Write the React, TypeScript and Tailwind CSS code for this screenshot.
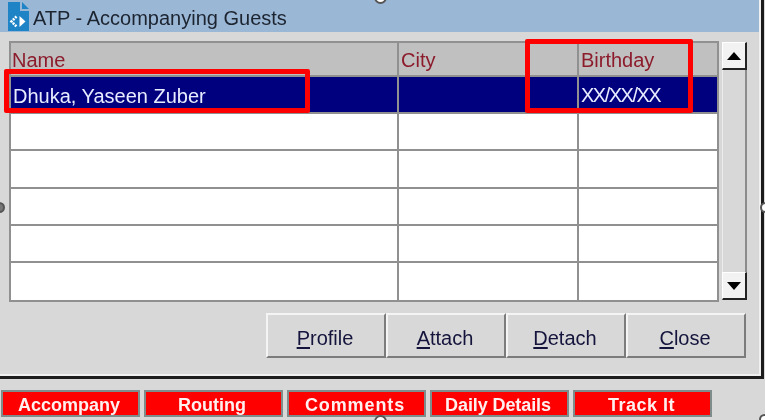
const FONT = "font-['Liberation_Sans',Arial,sans-serif]";

function FileIcon() {
  return (
    <svg width="21" height="29" viewBox="0 0 21 29" className="shrink-0">
      <path d="M0 0H12V9H21V29H0Z" fill="#1f84c6" />
      <path d="M14 0L21 7H14Z" fill="#1f84c6" />
      <path d="M11.5 14L17.5 19.5L11.5 25Z" fill="#fff" />
      <path d="M8.5 14.5L3.5 19.5L8.5 24.5" fill="none" stroke="#fff" strokeWidth="2.6" strokeDasharray="2 1" />
    </svg>
  );
}

function Row({ selected, last }: { selected?: boolean; last?: boolean }) {
  return (
    <div
      className={`flex h-[37.2px] ${last ? "" : "border-b-2 border-[#909090]"} ${selected ? "bg-[#00007f] text-[#e8ecff]" : "bg-white"}`}
    >
      <div className="flex w-[388px] items-center border-r-2 border-[#909090] pl-[2px] pt-[3px] text-[20px]">
        {selected ? "Dhuka, Yaseen Zuber" : ""}
      </div>
      <div className="w-[180px] border-r-2 border-[#909090]" />
      <div className="flex flex-1 items-center pl-[2px] pt-[1px] text-[20px] tracking-[-1.5px]">{selected ? "XX/XX/XX" : ""}</div>
    </div>
  );
}

function ActionButton({ letter, rest }: { letter: string; rest: string }) {
  return (
    <button className="flex h-[45px] w-[120px] items-center justify-center border-t-2 border-l-2 border-t-[#f4f4f4] border-l-[#f4f4f4] border-r-2 border-b-2 border-r-[#7c7c7c] border-b-[#7c7c7c] bg-[#d8d8d8] pt-[5px] pr-[2px] text-[20px] text-[#14143c]">
      <span className="underline underline-offset-2">{letter}</span>
      {rest}
    </button>
  );
}

function RedButton({ label, spacing }: { label: string; spacing?: string }) {
  return (
    <div
      className={`flex h-[27px] w-[139px] items-center justify-center border-2 border-[#7e8c8c] bg-[#ff0000] pt-[3px] pr-[3px] text-[18px] font-bold text-[#fff0f0] ${spacing ?? ""}`}
    >
      {label}
    </div>
  );
}

function ScrollArrow({ up }: { up?: boolean }) {
  return (
    <div className="flex h-[28px] items-center justify-center border-t border-l border-t-white border-l-white border-r-2 border-b-2 border-r-[#222] border-b-[#222] bg-[#f2f2f2]">
      <svg width="14" height="8" viewBox="0 0 14 8">
        <path d={up ? "M7 0L14 8H0Z" : "M0 0H14L7 8Z"} fill="#000" />
      </svg>
    </div>
  );
}

export default function App() {
  return (
    <div className="h-[420px] w-[765px] overflow-hidden bg-[#d8d8d8]">
      <div className={`${FONT} relative h-[420px] w-[765px] bg-[#d8d8d8] blur-[0.5px]`}>
        <div className="h-[379px] w-[764px] border-r-[3px] border-b-[3px] border-[#1c1c1c]">
          <div className="h-full border-r-2 border-b-2 border-[#efefef]">
            <div className="flex h-[32px] items-center gap-[4px] bg-[#9bb7d6] pl-[8px] pt-[1px] text-[20px] text-[#1c2430]">
              <FileIcon />
              <span className="pt-[2px]">ATP - Accompanying Guests</span>
            </div>
            <div className="flex gap-[3px] pl-[9px] pt-[9px]">
              <div className="h-[261px] w-[710px] border-2 border-[#909090]">
                <div className="flex h-[34px] border-b-2 border-[#909090] bg-[#c0c0c0] text-[20px] text-[#8c1c2c]">
                  <div className="flex w-[388px] items-end border-r-2 border-[#909090] pl-[1px]">Name</div>
                  <div className="flex w-[180px] items-end border-r-2 border-[#909090] pl-[2px]">City</div>
                  <div className="flex flex-1 items-end pl-[2px]">Birthday</div>
                </div>
                <Row selected />
                <Row />
                <Row />
                <Row />
                <Row />
                <Row last />
              </div>
              <div className="mt-px flex h-[258px] w-[25px] flex-col bg-[#d8d8d8]">
                <ScrollArrow up />
                <div className="flex-1 border-x border-[#ececec] border-r-2 border-r-[#8c8c8c]" />
                <ScrollArrow />
              </div>
            </div>
            <div className="flex pl-[266px] pt-[11px]">
              <ActionButton letter="P" rest="rofile" />
              <ActionButton letter="A" rest="ttach" />
              <ActionButton letter="D" rest="etach" />
              <ActionButton letter="C" rest="lose" />
            </div>
          </div>
        </div>
        <div className="flex gap-[4px] pl-px pt-[11px]">
          <RedButton label="Accompany" />
          <RedButton label="Routing" />
          <RedButton label="Comments" spacing="tracking-[0.9px]" />
          <RedButton label="Daily Details" spacing="tracking-[-0.1px]" />
          <RedButton label="Track It" spacing="tracking-[0.5px] pl-[1px]" />
        </div>

        <div className="absolute left-[4px] top-[69px] h-[44px] w-[306px] rounded-[2px] border-[5px] border-[#ff0000]" />
        <div className="absolute left-[525px] top-[39px] h-[74px] w-[168px] rounded-[2px] border-[5px] border-[#ff0000]" />

        <div className="absolute left-[374px] top-[-9px] h-[13px] w-[13px] rounded-full border-2 border-[#555] bg-white" />
        <div className="absolute left-[374px] top-[415px] h-[13px] w-[13px] rounded-full border-2 border-[#555] bg-white" />
        <div className="absolute left-[-6px] top-[202px] h-[11px] w-[11px] rounded-full border-2 border-[#555] bg-[#777]" />
        <div className="absolute left-[760px] top-[202px] h-[11px] w-[11px] rounded-full border-2 border-[#555] bg-white" />
        <div className="absolute left-[759px] top-[414px] h-[11px] w-[11px] rounded-full border-2 border-[#555] bg-white" />
      </div>
    </div>
  );
}
